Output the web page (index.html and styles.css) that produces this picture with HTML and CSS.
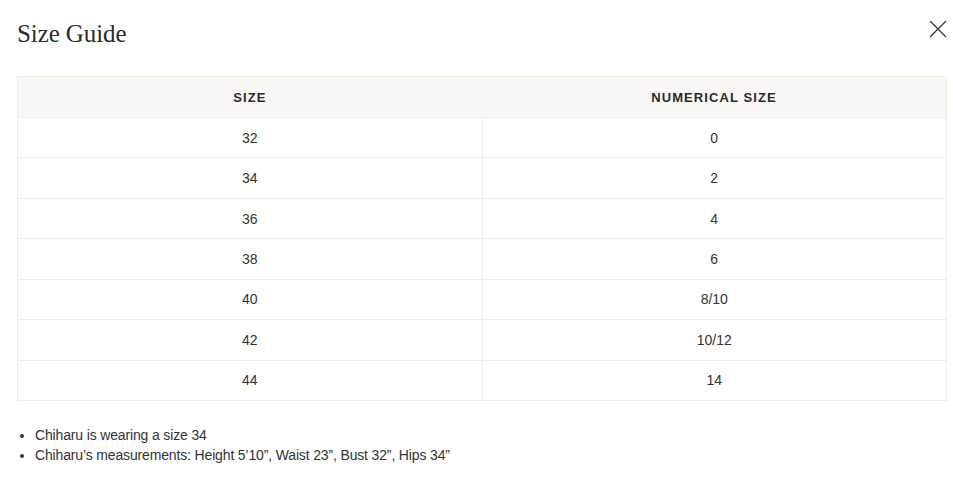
FILE: index.html
```html
<!DOCTYPE html>
<html>
<head>
<meta charset="utf-8">
<link rel="stylesheet" href="styles.css">
</head>
<body>
<div class="modal">
  <div class="head">
    <h1 class="title">Size Guide</h1>
    <button class="close" aria-label="Close">
      <svg width="18" height="18" viewBox="0 0 18 18"><path d="M1 1L17 17M17 1L1 17" stroke="#333" stroke-width="1.2" fill="none"/></svg>
    </button>
  </div>
  <table class="guide">
    <thead>
      <tr><th>SIZE</th><th>NUMERICAL SIZE</th></tr>
    </thead>
    <tbody>
      <tr><td>32</td><td>0</td></tr>
      <tr><td>34</td><td>2</td></tr>
      <tr><td>36</td><td>4</td></tr>
      <tr><td>38</td><td>6</td></tr>
      <tr><td>40</td><td>8/10</td></tr>
      <tr><td>42</td><td>10/12</td></tr>
      <tr><td>44</td><td>14</td></tr>
    </tbody>
  </table>
  <ul class="notes">
    <li>Chiharu is wearing a size 34</li>
    <li>Chiharu’s measurements: Height 5’10”, Waist 23”, Bust 32”, Hips 34”</li>
  </ul>
</div>
</body>
</html>
```
FILE: styles.css
```css
html, body { margin: 0; padding: 0; background: #fff; }
body {
  font-family: "Liberation Sans", Arial, sans-serif;
  color: #2a2a2a;
}
.modal { padding: 0 6px 0 17px; }
.head {
  display: flex;
  justify-content: space-between;
  align-items: flex-start;
  height: 76px;
}
.title {
  margin: 0;
  padding-top: 19px;
  font-family: "Liberation Serif", "Times New Roman", serif;
  font-weight: 400;
  font-size: 25px;
  line-height: 30px;
  color: #2b2b2b;
  letter-spacing: -0.1px;
}
.close {
  margin-top: 20px;
  margin-right: 0;
  padding: 0;
  border: 0;
  background: none;
  width: 18px;
  height: 18px;
  cursor: pointer;
}
.close svg { display: block; }
.guide {
  width: 930px;
  border-collapse: collapse;
  table-layout: fixed;
  border: 1px solid #f1efe4;
}
.guide th {
  background: #f9f8f4;
  height: 40px;
  padding: 0;
  font-size: 13px;
  font-weight: 700;
  letter-spacing: 1.1px;
  color: #2a2a2a;
  text-align: center;
}
.guide td {
  height: 39.45px;
  padding: 0;
  text-align: center;
  font-size: 14px;
  color: #333;
  border-top: 1px solid #f1efe4;
}
.guide td + td { border-left: 1px solid #f1efe4; }
.notes {
  margin: 24px 0 0;
  padding-left: 18px;
  font-size: 14px;
  letter-spacing: -0.15px;
  line-height: 20px;
  color: #333;
}
```
